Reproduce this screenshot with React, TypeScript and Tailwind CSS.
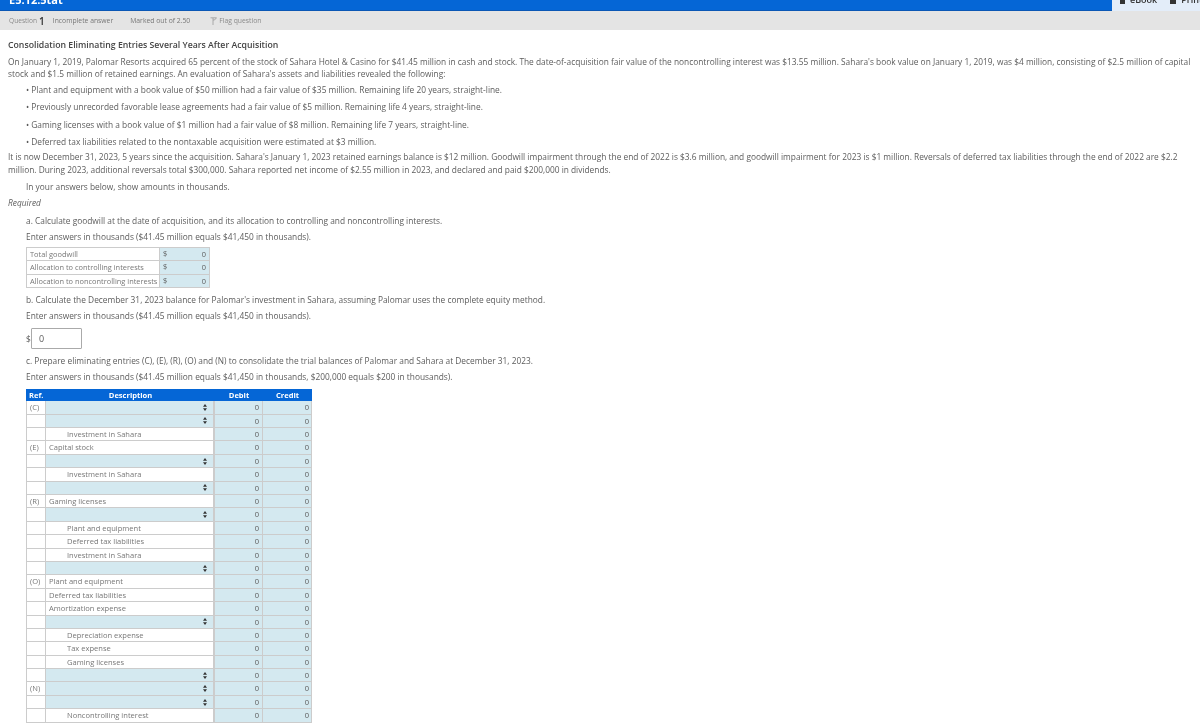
import React from "react";

type Row = { ref?: string; desc?: string; indent?: boolean };

const rows: Row[] = [
  { ref: "(C)" },
  {},
  { desc: "Investment in Sahara", indent: true },
  { ref: "(E)", desc: "Capital stock" },
  {},
  { desc: "Investment in Sahara", indent: true },
  {},
  { ref: "(R)", desc: "Gaming licenses" },
  {},
  { desc: "Plant and equipment", indent: true },
  { desc: "Deferred tax liabilities", indent: true },
  { desc: "Investment in Sahara", indent: true },
  {},
  { ref: "(O)", desc: "Plant and equipment" },
  { desc: "Deferred tax liabilities" },
  { desc: "Amortization expense" },
  {},
  { desc: "Depreciation expense", indent: true },
  { desc: "Tax expense", indent: true },
  { desc: "Gaming licenses", indent: true },
  {},
  { ref: "(N)" },
  {},
  { desc: "Noncontrolling interest", indent: true },
];

const goodwill = ["Total goodwill", "Allocation to controlling interests", "Allocation to noncontrolling interests"];

function Stepper() {
  return (
    <svg width="4" height="7" viewBox="0 0 4 7" className="mr-[6px] fill-[#333]">
      <path d="M2 0 4 2.700H0z" />
      <path d="M2 7 0 4.300h4z" />
    </svg>
  );
}

export default function App() {
  return (
    <div className="w-[1200px] h-[726px] overflow-hidden bg-white text-[8.350px] leading-[12px] text-[#5c5c5c] font-['Open_Sans',sans-serif] blur-[0.3px]">
      <div className="flex h-[11px] overflow-hidden">
        <div className="flex-1 bg-[#0566d6] pl-[9px] border-b border-[#0a57b5] overflow-hidden">
          <div className="-mt-[7px] text-[11px] leading-[14px] font-bold text-white">E5.12.5tat</div>
        </div>
        <div className="w-[88px] bg-[#e3edf9] flex gap-[13px] pl-[8px] overflow-hidden">
          <div className="-mt-[7px] flex items-center gap-[5px] h-[14px] text-[9px] font-semibold text-[#333]">
            <span className="w-[5px] h-[8px] bg-[#333]" />
            eBook
          </div>
          <div className="-mt-[7px] flex items-center gap-[5px] h-[14px] text-[9px] font-semibold text-[#333]">
            <span className="w-[6px] h-[8px] bg-[#333]" />
            Print
          </div>
        </div>
      </div>

      <div className="h-[19px] bg-[#e4e4e4] flex items-center pl-[9px] text-[6.800px] text-[#777]">
        <span className="text-[6.600px] text-[#8a8a8a]">Question</span>
        <span className="ml-[2px] text-[10px] font-semibold text-[#333]">1</span>
        <span className="ml-[8px]">Incomplete answer</span>
        <span className="ml-[17px]">Marked out of 2.50</span>
        <svg width="7" height="8" viewBox="0 0 7 8" className="ml-[20px] stroke-[#999] fill-none">
          <path d="M3 8V1M.5 .8h6L4.500 3H3" strokeWidth=".8" />
        </svg>
        <span className="ml-[2px] text-[#8a8a8a]">Flag question</span>
      </div>

      <div className="px-[8px]">
        <h1 className="mt-[9px] text-[8.720px] leading-[12px] font-semibold text-[#444]">
          Consolidation Eliminating Entries Several Years After Acquisition
        </h1>
        <p className="mt-[5px] leading-[12.400px] w-[1186px]">
          On January 1, 2019, Palomar Resorts acquired 65 percent of the stock of Sahara Hotel &amp; Casino for $41.45 million in cash and stock. The date-of-acquisition fair value of the noncontrolling interest was $13.55 million. Sahara's book value on January 1, 2019, was $4 million, consisting of $2.5 million of capital stock and $1.5 million of retained earnings. An evaluation of Sahara's assets and liabilities revealed the following:
        </p>
        <div className="mt-[3px] pl-[18px] flex flex-col gap-[5.400px]">
          <p>• Plant and equipment with a book value of $50 million had a fair value of $35 million. Remaining life 20 years, straight-line.</p>
          <p>• Previously unrecorded favorable lease agreements had a fair value of $5 million. Remaining life 4 years, straight-line.</p>
          <p>• Gaming licenses with a book value of $1 million had a fair value of $8 million. Remaining life 7 years, straight-line.</p>
          <p>• Deferred tax liabilities related to the nontaxable acquisition were estimated at $3 million.</p>
        </div>
        <p className="mt-[3px] leading-[12.800px] w-[1186px]">
          It is now December 31, 2023, 5 years since the acquisition. Sahara's January 1, 2023 retained earnings balance is $12 million. Goodwill impairment through the end of 2022 is $3.6 million, and goodwill impairment for 2023 is $1 million. Reversals of deferred tax liabilities through the end of 2022 are $2.2 million. During 2023, additional reversals total $300,000. Sahara reported net income of $2.55 million in 2023, and declared and paid $200,000 in dividends.
        </p>
        <p className="mt-[4.500px] ml-[18px]">In your answers below, show amounts in thousands.</p>
        <p className="mt-[4px] italic">Required</p>

        <div className="ml-[18px]">
          <p className="mt-[6px]">a. Calculate goodwill at the date of acquisition, and its allocation to controlling and noncontrolling interests.</p>
          <p className="mt-[4px]">Enter answers in thousands ($41.45 million equals $41,450 in thousands).</p>

          <div className="mt-[4px] w-[184px] border-t border-l border-[#ccc] text-[7.420px]">
            {goodwill.map((g) => (
              <div key={g} className="flex h-[13.400px] border-b border-[#ccc] leading-[12px]">
                <div className="w-[133px] pl-[3px] border-r border-[#ccc] whitespace-nowrap overflow-hidden text-[#777]">{g}</div>
                <div className="flex-1 bg-[#d4e9f0] border-r border-[#ccc] flex justify-between px-[3px]">
                  <span>$</span>
                  <span>0</span>
                </div>
              </div>
            ))}
          </div>

          <p className="mt-[6px]">b. Calculate the December 31, 2023 balance for Palomar's investment in Sahara, assuming Palomar uses the complete equity method.</p>
          <p className="mt-[4px]">Enter answers in thousands ($41.45 million equals $41,450 in thousands).</p>
          <div className="mt-[6px] flex items-center h-[21px]">
            <span className="w-[5px]">$</span>
            <div className="w-[51px] h-[21px] border border-[#aaa] rounded-[1px] flex items-center pl-[7px] text-[9px]">0</div>
          </div>

          <p className="mt-[6px]">c. Prepare eliminating entries (C), (E), (R), (O) and (N) to consolidate the trial balances of Palomar and Sahara at December 31, 2023.</p>
          <p className="mt-[4px]">Enter answers in thousands ($41.45 million equals $41,450 in thousands, $200,000 equals $200 in thousands).</p>

          <div className="mt-[6px] w-[286px] text-[7.550px]">
            <div className="flex h-[12px] bg-[#0566d6] text-white font-bold leading-[12px]">
              <div className="w-[20px] pl-[3px]">Ref.</div>
              <div className="w-[169px] text-center">Description</div>
              <div className="w-[48px] text-center">Debit</div>
              <div className="w-[49px] text-center">Credit</div>
            </div>
            {rows.map((r, i) => (
              <div key={i} className="flex h-[13.400px] border-b border-[#ccc] leading-[12px]">
                <div className="w-[20px] pl-[3px] border-x border-[#ccc] text-[#777]">{r.ref}</div>
                {r.desc ? (
                  <div className={`w-[169px] border-r-2 border-[#ccc] text-[#777] ${r.indent ? "pl-[21px]" : "pl-[3px]"}`}>{r.desc}</div>
                ) : (
                  <div className="w-[169px] bg-[#d4e9f0] border-r-2 border-[#ccc] flex items-center justify-end">
                    <Stepper />
                  </div>
                )}
                <div className="w-[48px] bg-[#d4e9f0] border-r border-[#ccc] text-right pr-[3px]">0</div>
                <div className="w-[49px] bg-[#d4e9f0] border-r border-[#ccc] text-right pr-[2px]">0</div>
              </div>
            ))}
          </div>
        </div>
      </div>
    </div>
  );
}
